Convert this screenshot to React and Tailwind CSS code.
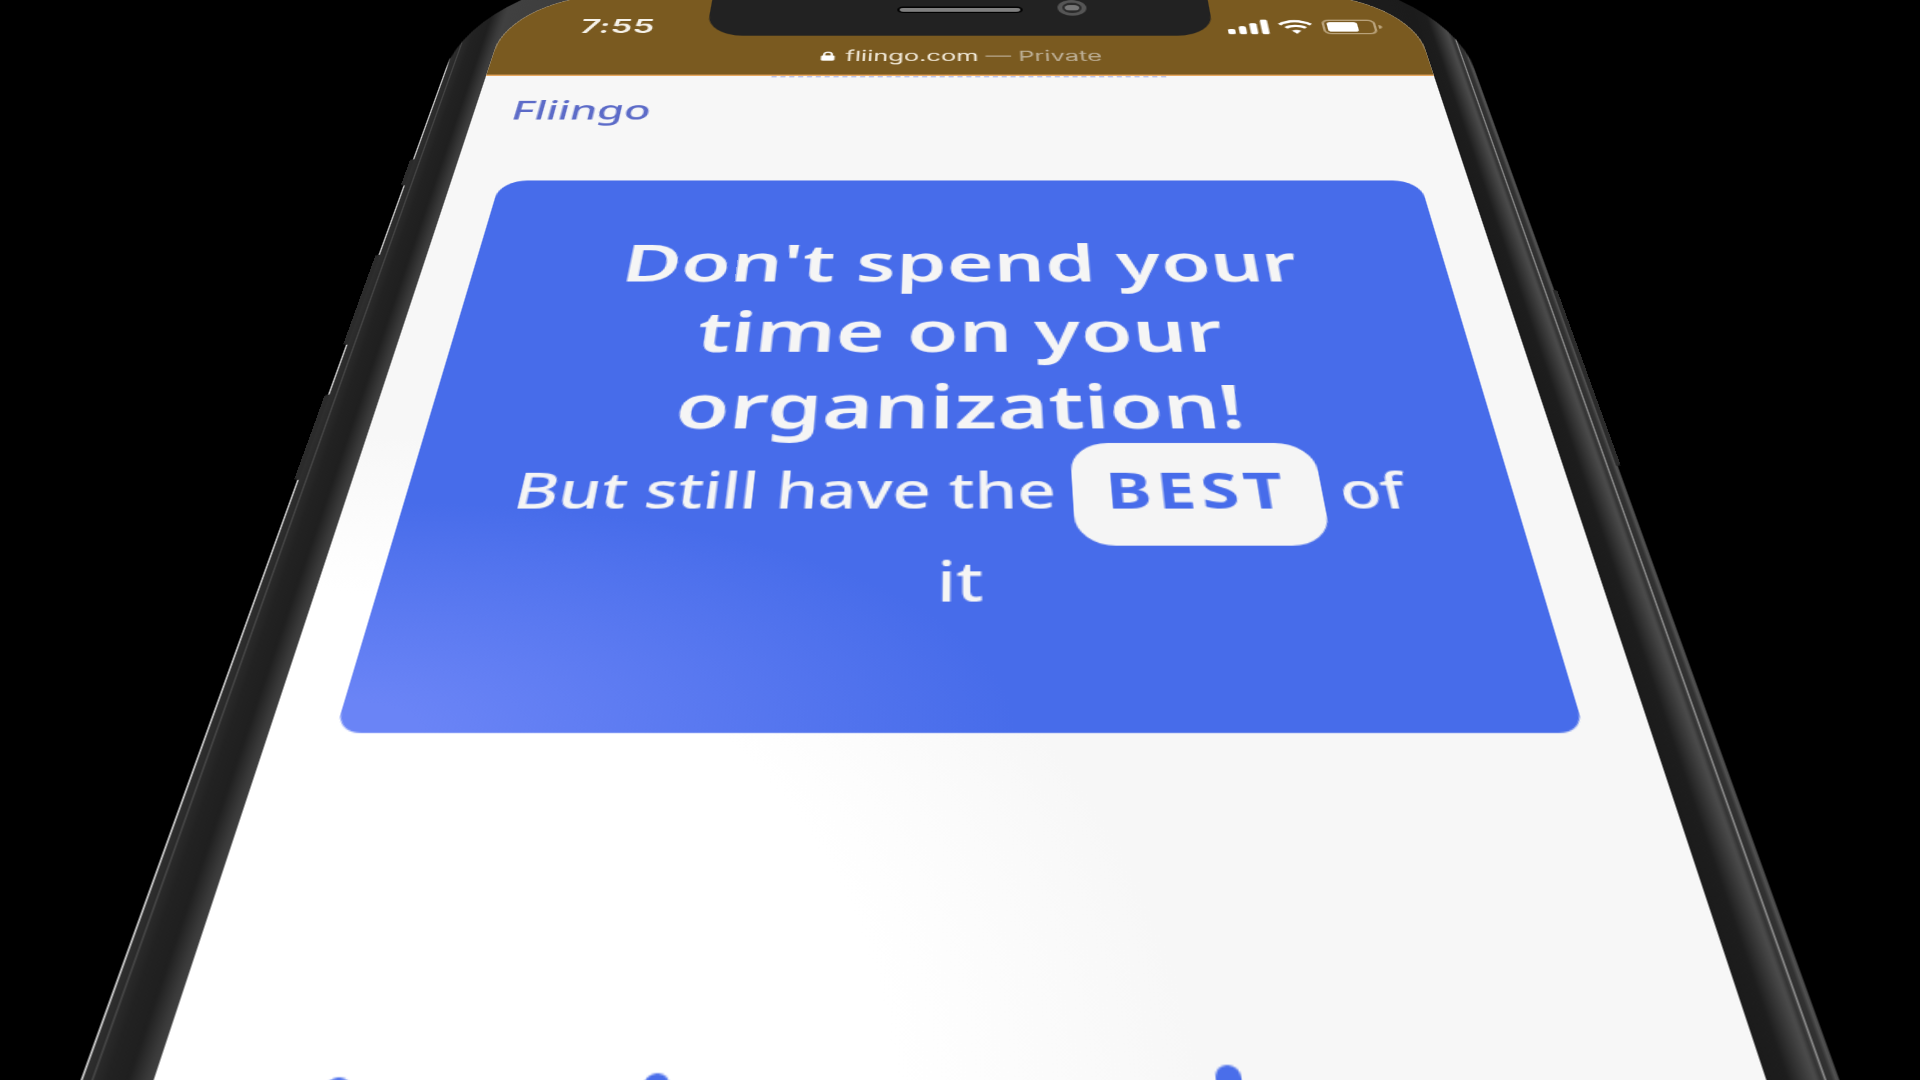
import React from "react";

const rounded = { fontFamily: '"Noto Sans", sans-serif' };
const ui = { fontFamily: 'Inter, sans-serif' };

function Cell() {
  return (
    <svg width="17" height="11" viewBox="0 0 17 11" fill="#fff">
      <rect x="0" y="7" width="3" height="4" rx="1" />
      <rect x="4.6" y="5" width="3" height="6" rx="1" />
      <rect x="9.2" y="2.6" width="3" height="8.4" rx="1" />
      <rect x="13.8" y="0" width="3" height="11" rx="1" />
    </svg>
  );
}
function Wifi() {
  return (
    <svg width="15" height="11" viewBox="0 0 15 11" fill="none" stroke="#fff" strokeWidth="1.7">
      <path d="M1 3.8 C4.6 0.4 10.4 0.4 14 3.8" />
      <path d="M3.4 6.2 C5.6 4.2 9.4 4.2 11.6 6.2" />
      <path d="M7.5 10.6 L5.6 8.4 C6.7 7.6 8.3 7.6 9.4 8.4 Z" fill="#fff" stroke="none" />
    </svg>
  );
}
function Battery() {
  return (
    <svg width="25" height="11" viewBox="0 0 25 11" fill="none">
      <rect x="0.5" y="0.5" width="21" height="10" rx="2.6" stroke="#b9a27a" />
      <rect x="2" y="2" width="12.5" height="7" rx="1.4" fill="#fff" />
      <path d="M23 4 C24 4.3 24.4 5 24.4 5.5 C24.4 6 24 6.7 23 7 Z" fill="#b9a27a" />
    </svg>
  );
}
function Lock() {
  return (
    <svg width="6" height="7" viewBox="0 0 7 8" fill="none">
      <path d="M1.7 3.6 V2.6 C1.7 0 5.3 0 5.3 2.6 V3.6" stroke="#fff" strokeWidth="1" />
      <rect x="0.3" y="3.3" width="6.4" height="4.5" rx="1" fill="#fff" />
    </svg>
  );
}

export default function App() {
  return (
    <div className="h-screen w-screen overflow-hidden bg-black">
      <div className="h-[1200px] w-[818px] [transform-origin:0_0] [transform:matrix3d(1.264,0,0,0,-0.48,0.678,0,-0.0005,0,0,1,0,486,76,0,1)_translate(-34px,-154px)]">
        <div className="relative h-[600px] w-[409px] rounded-t-[72px] px-[17px] pt-[17px] [zoom:2] bg-[linear-gradient(90deg,#666_0,#e4e4e4_0.2px,#2e2e2e_0.6px,#2a2a2a_2.3px,#555_2.6px,#2a2a2a_3px,#222_6px,#1f1f1f_11px,#3a3a3a_15.5px,#404040_17px,#1b1b1b_392px,#1d1d1d_397px,#4c4c4c_403.5px,#2c2c2c_405.2px,#b0b0b0_405.6px,#2f2f2f_406.1px,#333_407.6px,#555_408px,#444_409px)]">
          <div className="absolute left-[-1px] top-[132px] h-[16px] w-[1.5px] rounded-l-[1px] bg-[#2b2b2b]" />
          <div className="absolute left-[-1px] top-[188px] h-[47px] w-[1.5px] rounded-l-[1px] bg-[#2b2b2b]" />
          <div className="absolute left-[-1px] top-[259px] h-[38px] w-[1.5px] rounded-l-[1px] bg-[#2b2b2b]" />
          <div className="absolute right-[-1px] top-[207px] h-[84px] w-[1.5px] rounded-r-[1px] bg-[#2b2b2b]" />

          <div className="relative h-full w-[375px] overflow-hidden rounded-t-[42px] bg-[radial-gradient(ellipse_255px_230px_at_-10px_490px,#ffffff_0%,#ffffff_72%,#f7f7f7_100%)]">
            <header className="relative h-[60px] border-b border-[#e8a860] bg-[#7a5a20]">
              <div className="absolute left-[84px] top-0 flex h-[31px] w-[207px] items-start justify-center rounded-b-[15px] bg-[#222]">
                <div className="mt-[9px] h-[5px] w-[52px] rounded-full border border-black bg-[#808080]" />
                <div className="absolute left-[144px] top-[4px] flex h-[12px] w-[12px] items-center justify-center rounded-full border-2 border-[#555] bg-[#2a2a2a]">
                  <div className="h-[4px] w-[6px] rounded-full bg-[#777]" />
                </div>
              </div>
              <div className="flex h-[34px] items-end justify-between pl-[32px] pr-[14px]" style={ui}>
                <span className="text-[14px] font-semibold leading-[20px] tracking-[0.2px] text-[#f5f1e8]">7:55</span>
                <div className="mb-[4px] flex items-end gap-[3.5px]">
                  <Cell />
                  <Wifi />
                  <Battery />
                </div>
              </div>
              <div className="mt-[4px] flex h-[16px] items-center justify-center gap-[4px] pl-[1px] text-[10.2px] leading-[16px]" style={ui}>
                <Lock />
                <span className="text-[#f2ead9]">fliingo.com <span className="text-[#bcae94]">— Private</span></span>
              </div>
            </header>

            <nav className="relative h-[68px] pl-[14.5px] pt-[11.5px]">
              <div className="absolute left-[113px] top-0 h-[1px] w-[157px] bg-[repeating-linear-gradient(90deg,#7d90e0_0,#7d90e0_2px,transparent_2px,transparent_3.5px)] opacity-50" />
              <span className="text-[16.8px] font-medium leading-[20px] text-[#5c6bc8]" style={rounded}>Fliingo</span>
            </nav>

            <section className="mx-[18px] h-[246.6px] rounded-t-[10px] rounded-b-[7px] bg-[radial-gradient(ellipse_185px_85px_at_0px_100%,#6a84f6_0%,#6a84f6_12%,#476cea_100%)] pt-[28.5px] text-center text-[#f5f5f5]" style={rounded}>
              <h1 className="text-[28px] font-semibold leading-[36px] tracking-[0.1px]">
                Don't spend your
                <br />
                time on your
                <br />
                organization!
              </h1>
              <p className="-mt-[0.5px] text-[20.7px] font-medium leading-[27px]">
                But still have the{" "}
                <span className="inline-block rounded-[12px] bg-[#f5f5f5] px-[10px] pb-[9px] pt-[6px] text-[21px] font-bold leading-[28px] tracking-[1.7px] text-[#476cea]">
                  BEST
                </span>{" "}
                of
                <br />
                it
              </p>
            </section>

            <div className="mt-[91px] flex items-start pl-[40px]">
              <div className="mt-[6px] h-[8px] w-[6px] rounded-full bg-[#4a6eea]" />
              <div className="ml-[49px] mt-[7px] h-[8px] w-[6px] rounded-full bg-[#4a6eea]" />
              <div className="ml-[13px] mt-[5px] h-[8px] w-[6px] rounded-full bg-[#4a6eea]" />
              <div className="ml-[127px] mt-[3px] h-[8px] w-[6px] rounded-full bg-[#4a6eea]" />
            </div>
          </div>
        </div>
      </div>
    </div>
  );
}
